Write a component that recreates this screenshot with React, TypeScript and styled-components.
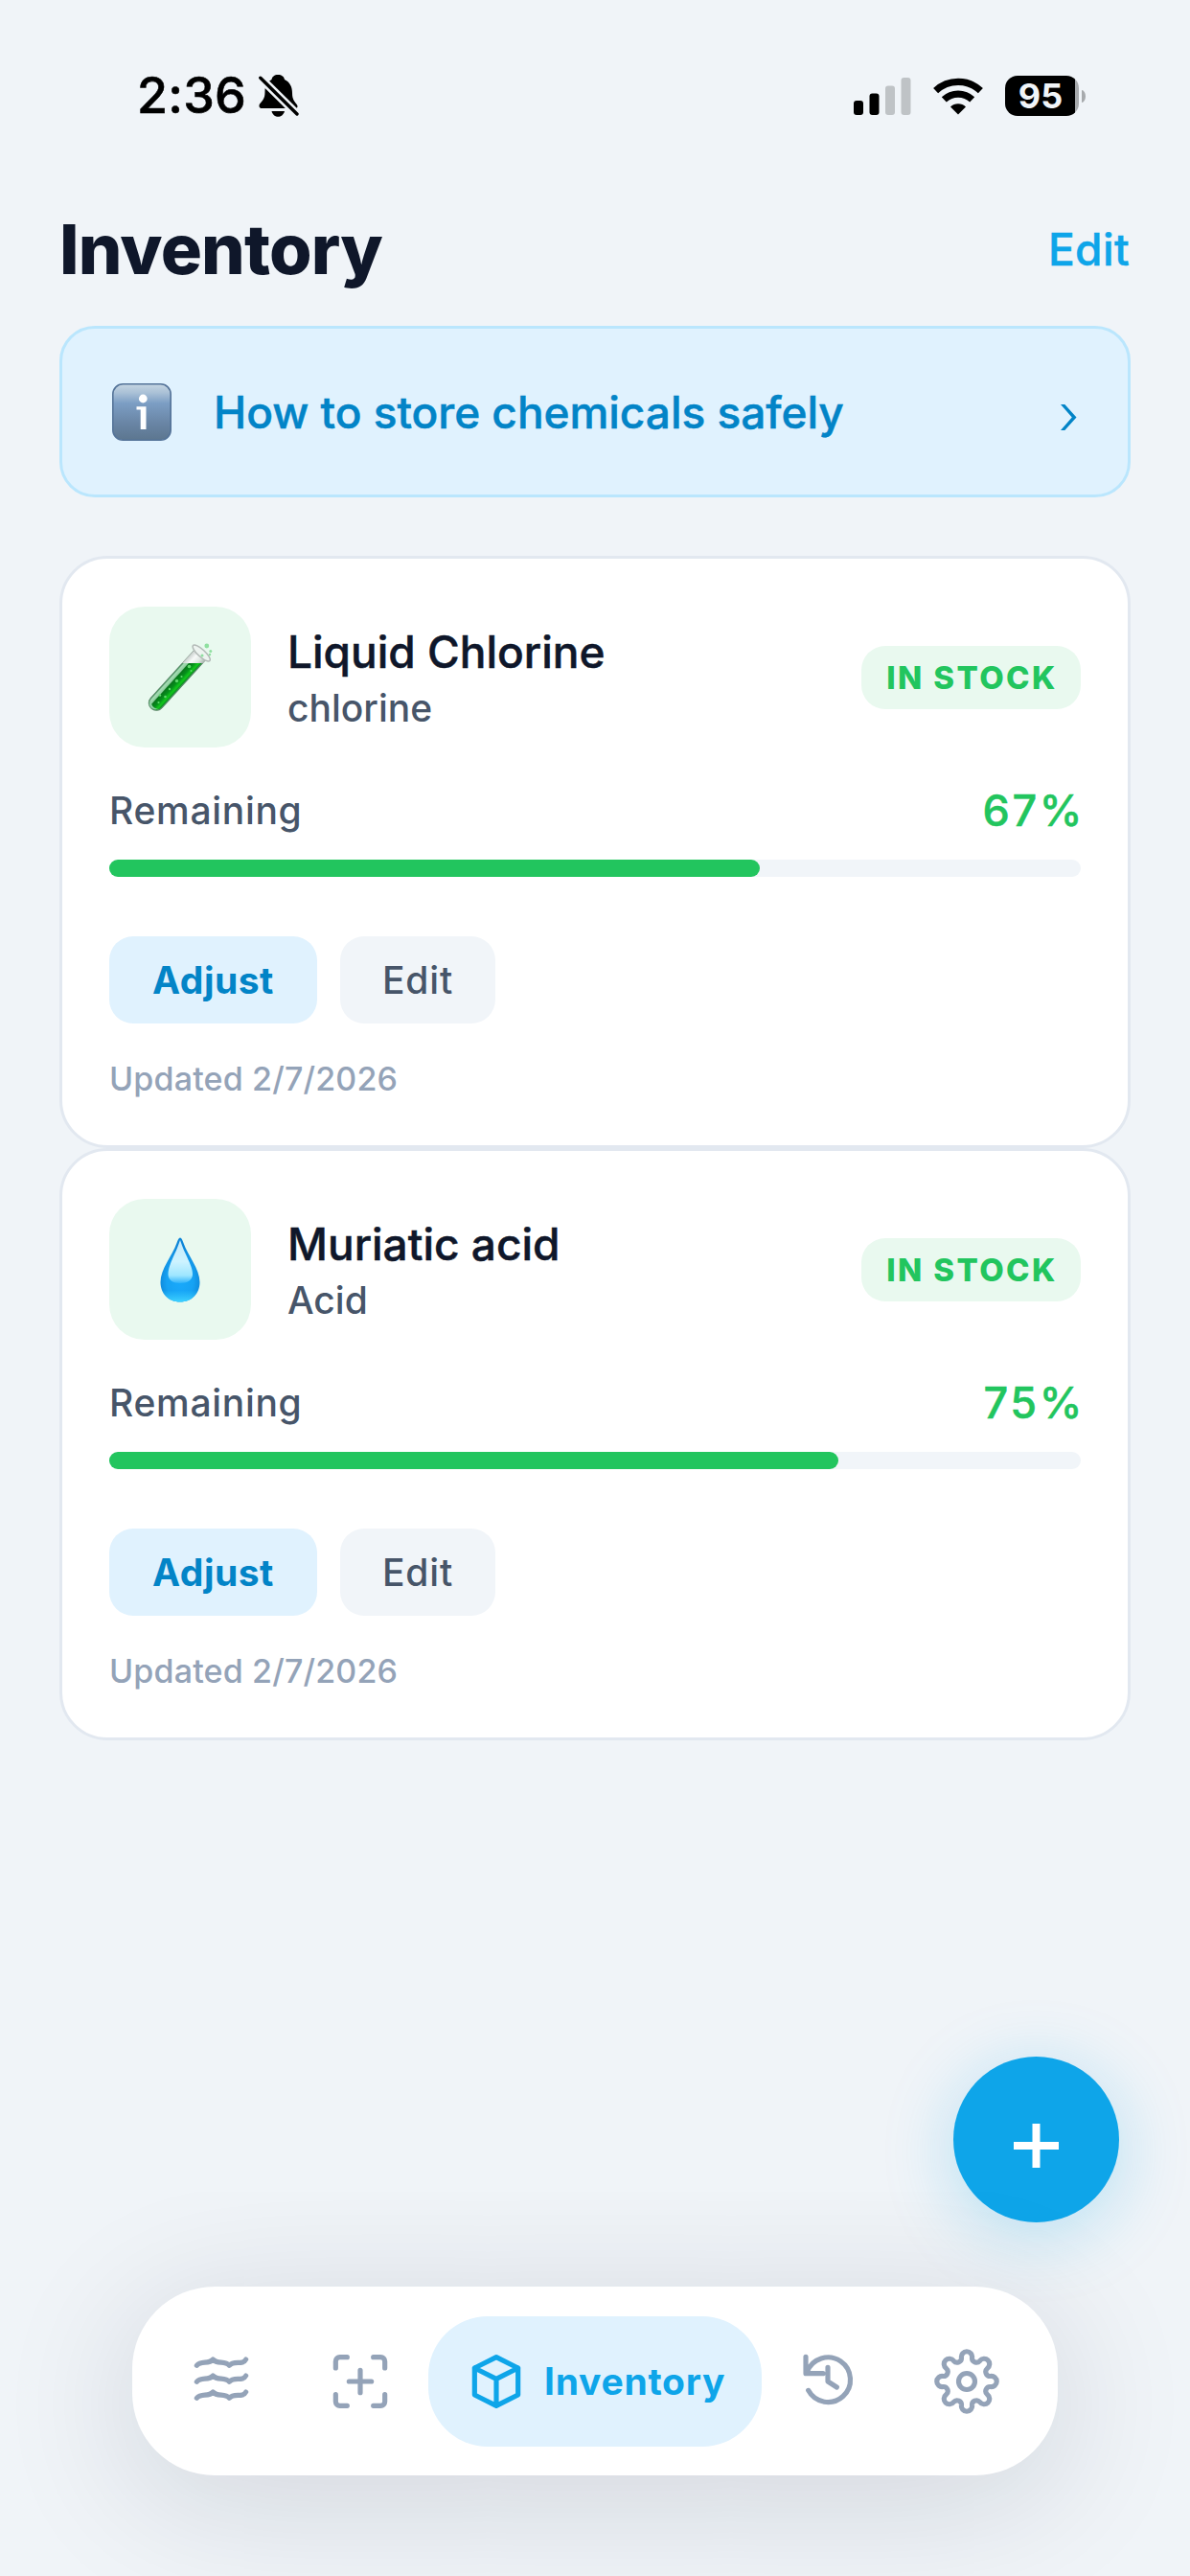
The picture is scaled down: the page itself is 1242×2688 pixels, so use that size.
import React from "react";
import styled, { createGlobalStyle } from "styled-components";

const GlobalStyle = createGlobalStyle`
  * { box-sizing: border-box; }
  html, body { margin: 0; padding: 0; background: #f0f4f8; }
  body { font-family: Inter, "Liberation Sans", sans-serif; -webkit-font-smoothing: antialiased; }
  button { font-family: inherit; border: 0; padding: 0; cursor: pointer; }
`;

const Screen = styled.div`
  position: relative;
  width: 1242px;
  height: 2688px;
  overflow: hidden;
  background: #f0f4f8;
  display: flex;
  flex-direction: column;
`;

const StatusBar = styled.div`
  height: 200px;
  padding: 0 109px 0 143px;
  display: flex;
  align-items: center;
  justify-content: space-between;
  color: #000;
`;

const StatusSide = styled.div<{ $gap: number }>`
  display: flex;
  align-items: center;
  gap: ${(p) => p.$gap}px;
`;

const Clock = styled.span`
  font-size: 52px;
  line-height: 60px;
  font-weight: 500;
  letter-spacing: 0.2px;
  -webkit-text-stroke: 0.6px currentColor;
`;

const Battery = styled.div`
  display: flex;
  align-items: center;
  gap: 3px;
`;

const BatteryBody = styled.div`
  width: 77px;
  height: 42px;
  border-radius: 13px;
  overflow: hidden;
  background: linear-gradient(to right, #000 73px, #a7aaad 73px);
  color: #f0f4f8;
  font-size: 36px;
  font-weight: 700;
  line-height: 42px;
  text-align: center;
  padding-right: 3px;
`;

const BatteryTip = styled.div`
  width: 4px;
  height: 13px;
  border-radius: 0 4px 4px 0 / 0 6.5px 6.5px 0;
  background: #a7aaad;
`;

const TitleRow = styled.header`
  height: 120px;
  padding: 0 62px;
  display: flex;
  align-items: center;
  justify-content: space-between;
`;

const Title = styled.h1`
  margin: 0;
  font-size: 72px;
  line-height: 80px;
  font-weight: 800;
  letter-spacing: -0.8px;
  color: #0f172a;
`;

const EditLink = styled.button`
  background: none;
  font-size: 46px;
  line-height: 60px;
  font-weight: 500;
  letter-spacing: 0.4px;
  -webkit-text-stroke: 0.5px currentColor;
  margin-right: 1px;
  color: #0ea5e9;
`;

const Main = styled.main`
  padding: 20px 62px 0;
  display: flex;
  flex-direction: column;
`;

const Banner = styled.div`
  height: 179px;
  margin-bottom: 61px;
  padding: 0 53px 0 52px;
  border: 3px solid #bae6fd;
  border-radius: 37px;
  background: #e0f2fe;
  display: flex;
  align-items: center;
  color: #0284c7;
`;

const BannerText = styled.span`
  flex: 1;
  margin-left: 44px;
  font-size: 46px;
  line-height: 60px;
  font-weight: 500;
  letter-spacing: -0.04px;
  -webkit-text-stroke: 0.5px currentColor;
`;

const Card = styled.section`
  height: 618px;
  padding: 50px 49px 39px;
  border: 3px solid #e2e8f0;
  border-radius: 50px;
  background: #fff;
  display: flex;
  flex-direction: column;
`;

const CardHeader = styled.div`
  height: 147px;
  display: flex;
  align-items: center;
`;

const Tile = styled.div`
  width: 148px;
  height: 147px;
  border-radius: 37px;
  background: #e9f9ef;
  display: flex;
  align-items: center;
  justify-content: center;
`;

const Names = styled.div`
  flex: 1;
  margin-left: 38px;
  padding-top: 3px;
  display: flex;
  flex-direction: column;
`;

const Name = styled.div`
  font-size: 46px;
  line-height: 60px;
  font-weight: 500;
  -webkit-text-stroke: 0.5px currentColor;
  color: #0f172a;
`;

const Kind = styled.div`
  font-size: 39px;
  line-height: 57px;
  font-weight: 500;
  color: #475569;
`;

const Badge = styled.div`
  width: 229px;
  height: 66px;
  padding-left: 2px;
  border-radius: 25px;
  background: #e9f9ef;
  color: #22c55e;
  font-size: 33px;
  line-height: 66px;
  font-weight: 800;
  letter-spacing: 2.4px;
  text-align: center;
`;

const LevelRow = styled.div`
  margin-top: 35px;
  height: 60px;
  display: flex;
  align-items: center;
  justify-content: space-between;
`;

const LevelLabel = styled.span`
  font-size: 39px;
  font-weight: 500;
  letter-spacing: 0.7px;
  color: #475569;
`;

const LevelValue = styled.span`
  margin-right: -4px;
  font-size: 45px;
  font-weight: 500;
  letter-spacing: 2.6px;
  -webkit-text-stroke: 0.5px currentColor;
  color: #22c55e;
`;

const Track = styled.div`
  margin-top: 22px;
  height: 18px;
  border-radius: 9px;
  background: #f1f5f9;
`;

const Fill = styled.div`
  height: 18px;
  border-radius: 9px;
  background: #22c55e;
`;

const Actions = styled.div`
  margin-top: 62px;
  display: flex;
  gap: 24px;
`;

const ActionButton = styled.button<{ $primary?: boolean }>`
  width: ${(p) => (p.$primary ? 217 : 162)}px;
  height: 91px;
  border-radius: 25px;
  font-size: 39px;
  font-weight: ${(p) => (p.$primary ? 700 : 500)};
  letter-spacing: ${(p) => (p.$primary ? 0.5 : 0.85)}px;
  color: ${(p) => (p.$primary ? "#0284c7" : "#475569")};
  background: ${(p) => (p.$primary ? "#e0f2fe" : "#f1f5f9")};
`;

const Updated = styled.div`
  margin-top: 28px;
  font-size: 34px;
  line-height: 60px;
  font-weight: 500;
  letter-spacing: 0.16px;
  color: #94a3b8;
`;

const Fab = styled.button`
  position: absolute;
  left: 995px;
  top: 2146px;
  width: 173px;
  height: 173px;
  border-radius: 50%;
  background: #0ea5e9;
  box-shadow: 0 12px 72px rgba(14, 165, 233, 0.26);
  display: flex;
  align-items: center;
  justify-content: center;
  color: #fff;
`;

const FabPlus = styled.svg`
  margin-top: 13px;
`;

const TabBar = styled.nav`
  position: absolute;
  left: 138px;
  top: 2386px;
  width: 966px;
  height: 197px;
  padding-left: 20px;
  border-radius: 86px;
  background: #fff;
  box-shadow: 0 24px 148px rgba(15, 23, 42, 0.14);
  display: grid;
  grid-template-columns: 145px 145px 343px 145px 145px;
  align-items: center;
  justify-items: center;
  color: #94a3b8;
`;

const ActiveTab = styled.div`
  width: 348px;
  height: 136px;
  margin: 0 -4px 0 -1px;
  padding-left: 37px;
  border-radius: 62px;
  background: #e0f2fe;
  display: flex;
  align-items: center;
  gap: 16px;
  color: #0ea5e9;
  font-size: 39px;
  font-weight: 700;
  letter-spacing: 0.74px;
`;

const BellOff = () => (
  <svg width="42" height="44" viewBox="0 0 42 44">
    <path d="M20 0C24 0 26.5 2 27 5C33 8 35 13 35 19C35 26 37.500 28 39.800 31C41.500 33.500 40 35 38.500 35H3C.5 35 0 32.500 1 30.500C4 27 6.500 25 6.500 18C6.500 12 8 8 13.500 5C14 2 16.500 0 20 0Z" />
    <path d="M13.500 38H27C26 42 23 43.800 20.200 43.800S14.500 42 13.500 38Z" />
    <path d="M-1 .5L43 44" stroke="#f0f4f8" strokeWidth="8.500" />
    <path d="M1.800 3.200L40 41" stroke="#000" strokeWidth="3.400" strokeLinecap="round" />
  </svg>
);

const Signal = () => (
  <svg width="60" height="39" viewBox="0 0 60 39">
    <rect x="0" y="24" width="10" height="15" rx="3" />
    <rect x="16.500" y="16.500" width="10" height="22.500" rx="3" />
    <rect x="33" y="8.500" width="10" height="30.500" rx="3" fill="#bfc3c6" />
    <rect x="49.500" y="0" width="10" height="39" rx="3" fill="#bfc3c6" />
  </svg>
);

const Wifi = () => (
  <svg width="52" height="39" viewBox="0 0 52 39">
    <g fill="none" stroke="#000" strokeWidth="7.300">
      <path d="M2.600 13.600A34.200 34.200 0 0 1 49.400 13.600" />
      <path d="M11.300 22.900A21.400 21.400 0 0 1 40.700 22.900" />
    </g>
    <path d="M26 38.500L18 30.400A11.600 11.600 0 0 1 34 30.400Z" />
  </svg>
);

const InfoEmoji = () => (
  <svg width="62" height="60" viewBox="0 0 62 60">
    <defs>
      <linearGradient id="info" x1="0" y1="0" x2="0" y2="1">
        <stop offset="0" stopColor="#c6d6e2" />
        <stop offset=".16" stopColor="#a9c0d6" />
        <stop offset=".34" stopColor="#7c9ec4" />
        <stop offset=".7" stopColor="#6985a5" />
        <stop offset="1" stopColor="#5c768f" />
      </linearGradient>
    </defs>
    <rect x=".8" y=".8" width="60.400" height="58.400" rx="10.500" fill="url(#info)" stroke="#557499" strokeWidth="1.600" />
    <circle cx="32.300" cy="16" r="4.400" fill="#fff" />
    <path d="M25.500 24.300H35.500V48H29.700V27.500H25.500Z" fill="#fff" />
  </svg>
);

const Chevron = styled.svg`
  margin-top: 11px;
`;

const TestTube = () => (
  <svg width="72" height="74" viewBox="0 0 72 74">
    <defs>
      <linearGradient id="liquid" x1="0" x2="1">
        <stop offset="0" stopColor="#5fa877" />
        <stop offset=".1" stopColor="#a5dcb3" />
        <stop offset=".27" stopColor="#8fce9f" />
        <stop offset=".34" stopColor="#08741a" />
        <stop offset=".6" stopColor="#05901b" />
        <stop offset=".82" stopColor="#12c81c" />
        <stop offset="1" stopColor="#0a7d24" />
      </linearGradient>
      <linearGradient id="glass" x1="0" x2="1">
        <stop offset="0" stopColor="#c9d0cd" />
        <stop offset=".35" stopColor="#f8faf9" />
        <stop offset=".7" stopColor="#dfe6e2" />
        <stop offset="1" stopColor="#a9b4ae" />
      </linearGradient>
      <clipPath id="surface">
        <path d="M0 22H72V74H0Z" />
      </clipPath>
    </defs>
    <path transform="translate(11.200 63.500) rotate(42.300)" d="M-8 -67V0A8 8 0 0 0 8 0V-67Z" fill="url(#glass)" stroke="#9aa8a0" strokeWidth=".9" />
    <g clipPath="url(#surface)">
      <path transform="translate(11.200 63.500) rotate(42.300)" d="M-7.600 -67V0A7.600 7.600 0 0 0 7.600 0V-67Z" fill="url(#liquid)" stroke="#4f8d62" strokeWidth="1" />
    </g>
    <path d="M5.500 61.500C6 67 9 69.500 13 69.500C9 71.500 4.500 69 4 65C3.900 63.500 4.500 62 5.500 61.500Z" fill="#8fd0a2" />
    <g fill="#5fd86c">
      <circle cx="45.500" cy="25.500" r="1.800" />
      <circle cx="47.500" cy="30" r="1" />
      <circle cx="37.500" cy="36" r="1.100" />
      <circle cx="32.500" cy="40.500" r="1.700" />
      <circle cx="25" cy="49" r="1.200" />
      <circle cx="20.500" cy="57" r="1.300" />
      <circle cx="15" cy="55.500" r="1.200" />
      <circle cx="13.500" cy="63" r="1.100" />
    </g>
    <ellipse cx="58.200" cy="11.500" rx="11.800" ry="3.800" transform="rotate(42.300 58.200 11.500)" fill="#eef2f0" fillOpacity=".8" stroke="#b3bab7" strokeWidth="1.500" />
    <g fill="#8fe0a0">
      <circle cx="63.800" cy="4" r="2.400" />
      <circle cx="67.800" cy="9.400" r="1.500" />
      <circle cx="67" cy="13" r="1.200" />
      <circle cx="59" cy="14" r="1.500" />
    </g>
  </svg>
);

const dropShape =
  "M21 .5C22.500 .5 23.500 3 24.500 6C29 19 41.500 33 41.500 47C41.500 59 33 67.500 21 67.500S.5 59 .5 47C.5 33 13 19 17.500 6C18.500 3 19.500 .5 21 .5Z";

const Droplet = () => (
  <svg width="42" height="68" viewBox="0 0 42 68">
    <defs>
      <radialGradient id="drop" cx=".5" cy=".68" r=".55">
        <stop offset="0" stopColor="#19a9fb" />
        <stop offset=".6" stopColor="#16a2f3" />
        <stop offset="1" stopColor="#0e86d8" />
      </radialGradient>
      <linearGradient id="dropBase" x1="0" y1="0" x2="0" y2="1">
        <stop offset=".82" stopColor="#38cdff" stopOpacity="0" />
        <stop offset="1" stopColor="#3fd2ff" />
      </linearGradient>
      <linearGradient id="shine" x1="0" y1="0" x2="0" y2="1">
        <stop offset="0" stopColor="#c9eafa" />
        <stop offset=".5" stopColor="#cdf3ff" />
        <stop offset=".82" stopColor="#9ee6ff" />
        <stop offset="1" stopColor="#2fb3fb" />
      </linearGradient>
    </defs>
    <path d={dropShape} fill="url(#drop)" />
    <path d={dropShape} fill="url(#dropBase)" />
    <path d="M21 3C22.500 7 24 12 27 18C30 25 34 32 34 38.500C34 45 28.500 48 21 48S8.500 45 8.500 38.500C8.500 32 12 25 15 18C18 12 19.500 7 21 3Z" fill="url(#shine)" />
  </svg>
);

const IconSvg = styled.svg`
  width: 68px;
  height: 68px;
  overflow: visible;
  fill: none;
  stroke: currentColor;
  stroke-width: 15.5;
  stroke-linecap: round;
  stroke-linejoin: round;
`;

const TabIcon = ({ children }: { children: React.ReactNode }) => (
  <IconSvg viewBox="0 0 204 204">{children}</IconSvg>
);

/** Outline of an eight-lobed cog: outer lobes joined by tangent valley arcs. */
const cogPath = (() => {
  const c = 102, ring = 76, lobe = 16.8, valleyRing = 79, valley = 13.8;
  const at = (r: number, deg: number) => [c + r * Math.cos((deg * Math.PI) / 180), c + r * Math.sin((deg * Math.PI) / 180)];
  const mix = (a: number[], b: number[]) => {
    const t = lobe / (lobe + valley);
    return `${(a[0] + (b[0] - a[0]) * t).toFixed(2)} ${(a[1] + (b[1] - a[1]) * t).toFixed(2)}`;
  };
  let d = "";
  for (let i = 0; i < 8; i++) {
    const a = i * 45;
    const l = at(ring, a);
    const before = mix(l, at(valleyRing, a - 22.5));
    const after = mix(l, at(valleyRing, a + 22.5));
    const next = mix(at(ring, a + 45), at(valleyRing, a + 22.5));
    if (!i) d += `M${before}`;
    d += `A${lobe} ${lobe} 0 1 1 ${after}A${valley} ${valley} 0 0 0 ${next}`;
  }
  return d + "Z";
})();

const wave = (y: number) =>
  `M25 ${y}C39 ${y - 17} 62 ${y - 2} 76 ${y - 19}C90 ${y - 2} 113 ${y - 17} 127 ${y}C141 ${y - 17} 170 ${y} 179 ${y - 19}`;

const items = [
  { name: "Liquid Chlorine", kind: "chlorine", level: 67, icon: <TestTube /> },
  { name: "Muriatic acid", kind: "Acid", level: 75, icon: <Droplet /> },
];

export default function App() {
  return (
    <>
      <GlobalStyle />
      <Screen>
        <StatusBar>
          <StatusSide $gap={13}>
            <Clock>2:36</Clock>
            <BellOff />
          </StatusSide>
          <StatusSide $gap={23}>
            <Signal />
            <Wifi />
            <Battery>
              <BatteryBody>95</BatteryBody>
              <BatteryTip />
            </Battery>
          </StatusSide>
        </StatusBar>
        <TitleRow>
          <Title>Inventory</Title>
          <EditLink>Edit</EditLink>
        </TitleRow>
        <Main>
          <Banner>
            <InfoEmoji />
            <BannerText>How to store chemicals safely</BannerText>
            <Chevron width="17" height="27" viewBox="0 0 17 27">
              <path d="M0 0H4.300L16.500 13.500L4.300 27H0L11.800 13.500Z" fill="#0284c7" />
            </Chevron>
          </Banner>
          {items.map((item) => (
            <Card key={item.name}>
              <CardHeader>
                <Tile>{item.icon}</Tile>
                <Names>
                  <Name>{item.name}</Name>
                  <Kind>{item.kind}</Kind>
                </Names>
                <Badge>IN STOCK</Badge>
              </CardHeader>
              <LevelRow>
                <LevelLabel>Remaining</LevelLabel>
                <LevelValue>{item.level + "%"}</LevelValue>
              </LevelRow>
              <Track>
                <Fill style={{ width: `${item.level}%` }} />
              </Track>
              <Actions>
                <ActionButton $primary>Adjust</ActionButton>
                <ActionButton>Edit</ActionButton>
              </Actions>
              <Updated>Updated 2/7/2026</Updated>
            </Card>
          ))}
        </Main>
        <Fab>
          <FabPlus width="47" height="46" viewBox="0 0 47 46">
            <path d="M23.500 0V46M0 23H47" stroke="#fff" strokeWidth="8" />
          </FabPlus>
        </Fab>
        <TabBar>
          <TabIcon>
            <path d={wave(52)} />
            <path d={wave(103)} />
            <path d={wave(154)} />
          </TabIcon>
          <TabIcon>
            <path d="M25 60V39A13 13 0 0 1 38 26H61M143 26H166A13 13 0 0 1 179 39V60M179 143V165A13 13 0 0 1 166 178H143M61 178H38A13 13 0 0 1 25 165V143M102 67V137M67 102H137" />
          </TabIcon>
          <ActiveTab>
            <TabIcon>
              <path d="M102 26L170 60V144L102 178L34 144V60ZM34 60L102 94L170 60M102 94V178" />
            </TabIcon>
            <span>Inventory</span>
          </ActiveTab>
          <TabIcon>
            <path d="M33 25V77H87M41 130A70 70 0 1 0 37 72M102 58V102L130 120" />
          </TabIcon>
          <TabIcon>
            <path d={cogPath} />
            <circle cx="102" cy="102" r="25.500" />
          </TabIcon>
        </TabBar>
      </Screen>
    </>
  );
}
